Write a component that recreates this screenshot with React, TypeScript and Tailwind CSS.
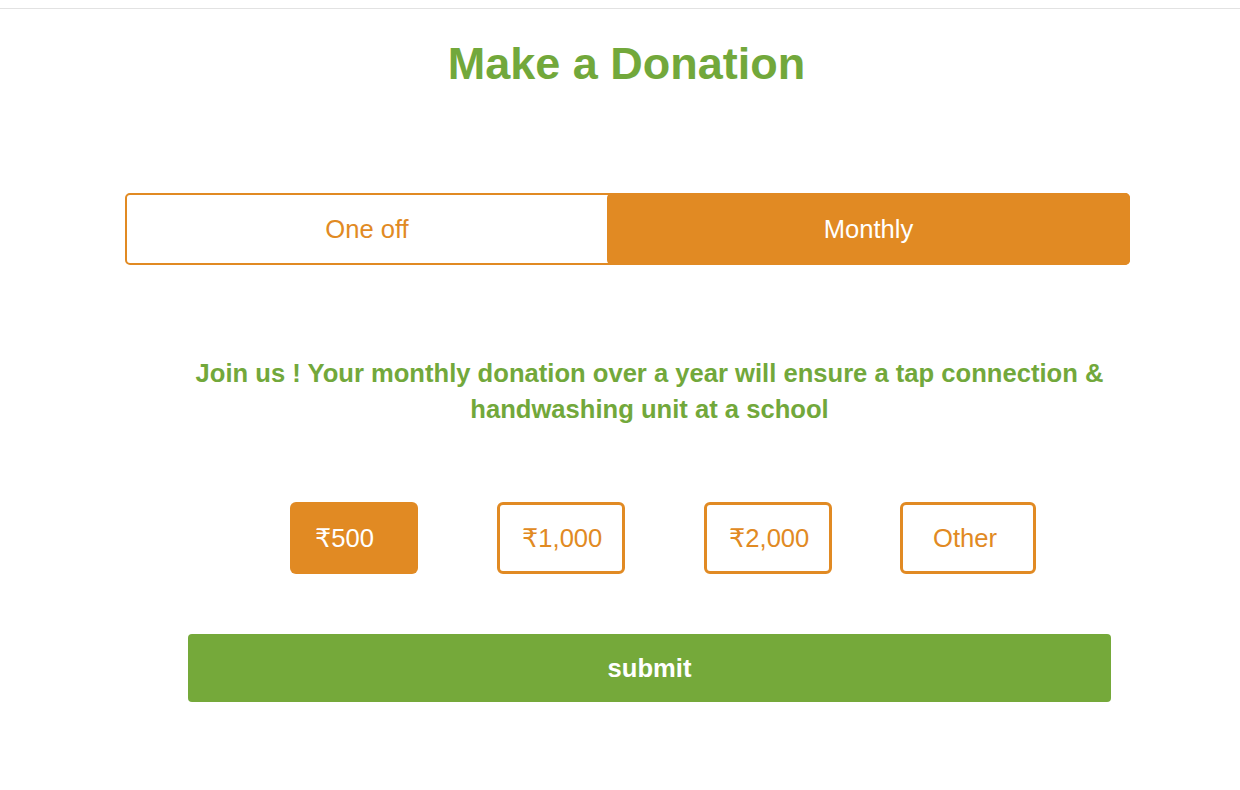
const amounts = [
  { label: "₹500", active: true, gap: "" },
  { label: "₹1,000", active: false, gap: "ml-[79px]" },
  { label: "₹2,000", active: false, gap: "ml-[79px]" },
];

export default function App() {
  return (
    <div className="min-h-[790px] bg-white font-['Liberation_Sans','DejaVu_Sans',sans-serif]">
      <div className="h-[9px] border-b border-[#e2e2e2]" />

      <h1 className="mt-[28px] h-[54px] pl-[13px] text-center text-[45px] leading-[54px] font-bold text-[#72a83b]">
        Make a Donation
      </h1>

      {/* one off / monthly toggle */}
      <div className="mt-[102px] ml-[125px] flex h-[72px] w-[1005px] rounded-[5px] border-2 border-[#e18a23]">
        <button className="w-[480px] text-[25.6px] text-[#e18a23]">One off</button>
        <button className="-my-[2px] -mr-[2px] flex-1 rounded-[5px] bg-[#e18a23] text-[25.6px] text-white">
          Monthly
        </button>
      </div>

      <p className="mt-[90px] ml-[188px] w-[923px] text-center text-[25.6px] leading-[36px] font-bold text-[#72a83b]">
        Join us ! Your monthly donation over a year will ensure a tap connection &amp; handwashing unit at a school
      </p>

      <div className="mt-[75px] ml-[290px] flex h-[72px]">
        {amounts.map((a) => (
          <button
            key={a.label}
            className={`${a.gap} h-[72px] w-[128px] rounded-[6px] text-left text-[25.6px] ${
              a.active
                ? "bg-[#e18a23] pl-[25px] text-white"
                : "border-[3px] border-[#e18a23] pl-[22px] text-[#e18a23]"
            }`}
          >
            {a.label}
          </button>
        ))}
        <button className="ml-[68px] h-[72px] w-[136px] rounded-[6px] border-[3px] border-[#e18a23] pl-[30px] text-left text-[25.6px] text-[#e18a23]">
          Other
        </button>
      </div>

      <button className="mt-[60px] ml-[188px] h-[68px] w-[923px] rounded-[4px] bg-[#75a93a] text-[25.6px] font-bold text-white">
        submit
      </button>
    </div>
  );
}
